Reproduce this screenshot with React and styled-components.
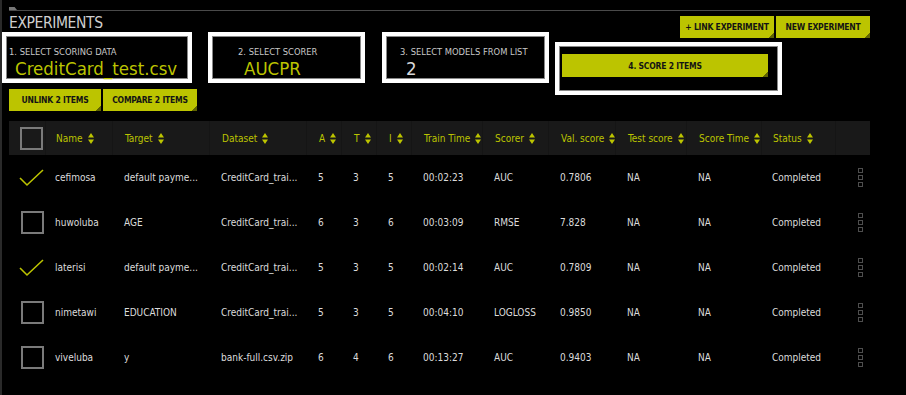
import React from "react";
import styled, { createGlobalStyle } from "styled-components";

const FONT = `"DejaVu Sans Condensed", "Liberation Sans", sans-serif`;
const LIME = "#bcc400";
const LIME_DARK = "#5f6300";

const Global = createGlobalStyle`
  html, body { margin: 0; padding: 0; background: #000; }
  body { font-family: ${FONT}; color: #ddd; }
`;

const Page = styled.div`
  width: 906px;
  height: 395px;
  background: #000;
  box-sizing: border-box;
  border-left: 2px solid #2a2a2a;
  padding: 0 36px 0 7px;
  overflow: hidden;
`;

const TopRule = styled.div`
  margin: 6px 0 0 0;
  height: 4px;
  display: flex;
  align-items: flex-end;
  border-bottom: 1px solid #4a4a4a;
`;

const Tab = styled.div`
  width: 8px;
  height: 3px;
  background: #777;
  clip-path: polygon(0 0, 70% 0, 100% 100%, 0 100%);
`;

const HeadRow = styled.div`
  display: flex;
  justify-content: space-between;
  align-items: flex-start;
  height: 21px;
`;

const Title = styled.h1`
  margin: 3px 0 0 0;
  font-size: 15.5px;
  font-weight: 400;
  color: #cfcfcf;
  letter-spacing: -0.4px;
  line-height: 18px;
`;

const Btn = styled.button`
  border: none;
  margin: 0;
  padding: 0;
  height: ${(p) => p.$h || 22}px;
  width: ${(p) => p.$w}px;
  flex-shrink: 0;
  background: linear-gradient(315deg, ${LIME_DARK} 0 4px, ${LIME} 4px);
  color: #141414;
  font-family: ${FONT};
  font-weight: 700;
  font-size: 8.5px;
  letter-spacing: -0.2px;
  white-space: nowrap;
  cursor: pointer;
`;

const BtnGroup = styled.div`
  display: flex;
  gap: 2px;
  margin-top: ${(p) => p.$mt || 0}px;
`;

const StepsRow = styled.div`
  display: flex;
  align-items: flex-start;
  margin-left: -7px;
`;

const StepBox = styled.div`
  box-sizing: border-box;
  flex-shrink: 0;
  width: ${(p) => p.$w}px;
  height: ${(p) => p.$h || 51}px;
  margin-left: ${(p) => p.$ml || 0}px;
  margin-top: ${(p) => p.$mt || 0}px;
  border: 4px solid #fff;
  box-shadow: inset 0 0 0 1px #888;
  padding: ${(p) => p.$pt || 10}px 0 0 ${(p) => p.$pl || 3}px;
  display: flex;
  flex-direction: column;
`;

const StepLabel = styled.div`
  font-size: 9.3px;
  color: #c8c8c8;
  line-height: 11px;
  white-space: nowrap;
`;

const StepValue = styled.div`
  margin-left: 6px;
  font-size: 18.5px;
  line-height: 23px;
  white-space: nowrap;
  color: ${(p) => (p.$plain ? "#d8d8d8" : LIME)};
`;

const Table = styled.div`
  margin-top: 10px;
  width: 861px;
`;

const COLS = "36px 67px 97px 97px 35px 35px 35px 71px 66px 67px 71px 75px 74px 35px";

const HeaderRow = styled.div`
  display: grid;
  grid-template-columns: ${COLS};
  height: 34px;
  background: #191919;
`;

const HeaderCell = styled.div`
  display: flex;
  align-items: center;
  padding-left: ${(p) => p.$pl ?? 12}px;
  border-left: ${(p) => (p.$first ? "none" : "1px solid #151515")};
  color: ${LIME};
  font-size: 10px;
  gap: 5px;
  white-space: nowrap;
  svg { flex-shrink: 0; }
`;

const Row = styled.div`
  display: grid;
  grid-template-columns: ${COLS};
  height: 45px;
`;

const Cell = styled.div`
  display: flex;
  align-items: center;
  padding-left: ${(p) => p.$pl ?? 13}px;
  font-size: 10px;
  color: #dcdcdc;
  white-space: nowrap;
  overflow: hidden;
`;

const Box = styled.div`
  box-sizing: border-box;
  width: 23px;
  height: 23px;
  border: 2px solid #7a7a7a;
`;

const Dots = styled.div`
  display: flex;
  flex-direction: column;
  gap: 2px;
  span {
    width: 3px;
    height: 3px;
    border: 1px solid #4e4e4e;
  }
`;

const Sort = () => (
  <svg width="6" height="11" viewBox="0 0 6 11">
    <path d="M3 0 L6 4.5 H0 Z M0 6.5 H6 L3 11 Z" fill={LIME} />
  </svg>
);

const Check = () => (
  <svg width="25" height="20" viewBox="0 0 25 20">
    <path d="M1 10 L8 17 L24 2" fill="none" stroke={LIME} strokeWidth="1.6" />
  </svg>
);

const headers = [
  ["Name", 10],
  ["Target"],
  ["Dataset"],
  ["A"],
  ["T"],
  ["I"],
  ["Train Time"],
  ["Scorer"],
  ["Val. score"],
  ["Test score"],
  ["Score Time"],
  ["Status", 11],
];

const rows = [
  { c: true, v: ["cefimosa", "default payme...", "CreditCard_trai...", "5", "3", "5", "00:02:23", "AUC", "0.7806", "NA", "NA", "Completed"] },
  { c: false, v: ["huwoluba", "AGE", "CreditCard_trai...", "6", "3", "6", "00:03:09", "RMSE", "7.828", "NA", "NA", "Completed"] },
  { c: true, v: ["laterisi", "default payme...", "CreditCard_trai...", "5", "3", "5", "00:02:14", "AUC", "0.7809", "NA", "NA", "Completed"] },
  { c: false, v: ["nimetawi", "EDUCATION", "CreditCard_trai...", "5", "3", "5", "00:04:10", "LOGLOSS", "0.9850", "NA", "NA", "Completed"] },
  { c: false, v: ["viveluba", "y", "bank-full.csv.zip", "6", "4", "6", "00:13:27", "AUC", "0.9403", "NA", "NA", "Completed"] },
];

export default function App() {
  return (
    <>
      <Global />
      <Page>
        <TopRule>
          <Tab />
        </TopRule>
        <HeadRow>
          <Title>EXPERIMENTS</Title>
          <BtnGroup $mt={5}>
            <Btn $w={94}>+ LINK EXPERIMENT</Btn>
            <Btn $w={94}>NEW EXPERIMENT</Btn>
          </BtnGroup>
        </HeadRow>
        <StepsRow>
          <StepBox $w={190} $pl={3}>
            <StepLabel>1. SELECT SCORING DATA</StepLabel>
            <StepValue>CreditCard_test.csv</StepValue>
          </StepBox>
          <StepBox $w={157} $ml={16} $pl={26}>
            <StepLabel>2. SELECT SCORER</StepLabel>
            <StepValue>AUCPR</StepValue>
          </StepBox>
          <StepBox $w={167} $ml={17} $pl={14}>
            <StepLabel>3. SELECT MODELS FROM LIST</StepLabel>
            <StepValue $plain>2</StepValue>
          </StepBox>
          <StepBox $w={227} $h={53} $ml={6} $mt={10} $pt={8} $pl={3}>
            <Btn $w={206} $h={23}>4. SCORE 2 ITEMS</Btn>
          </StepBox>
        </StepsRow>
        <BtnGroup $mt={-6}>
          <Btn $w={92}>UNLINK 2 ITEMS</Btn>
          <Btn $w={94}>COMPARE 2 ITEMS</Btn>
        </BtnGroup>
        <Table>
          <HeaderRow>
            <HeaderCell $pl={11} $first>
              <Box />
            </HeaderCell>
            {headers.map(([h, pl]) => (
              <HeaderCell key={h} $pl={pl}>
                {h}
                <Sort />
              </HeaderCell>
            ))}
            <HeaderCell />
          </HeaderRow>
          {rows.map((r, i) => (
            <Row key={i}>
              <Cell $pl={r.c ? 10 : 12}>{r.c ? <Check /> : <Box />}</Cell>
              {r.v.map((t, j) => (
                <Cell key={j} $pl={j === 0 ? 10 : j === 11 ? 11 : 12}>
                  {t}
                </Cell>
              ))}
              <Cell $pl={23}>
                <Dots>
                  <span />
                  <span />
                  <span />
                </Dots>
              </Cell>
            </Row>
          ))}
        </Table>
      </Page>
    </>
  );
}
